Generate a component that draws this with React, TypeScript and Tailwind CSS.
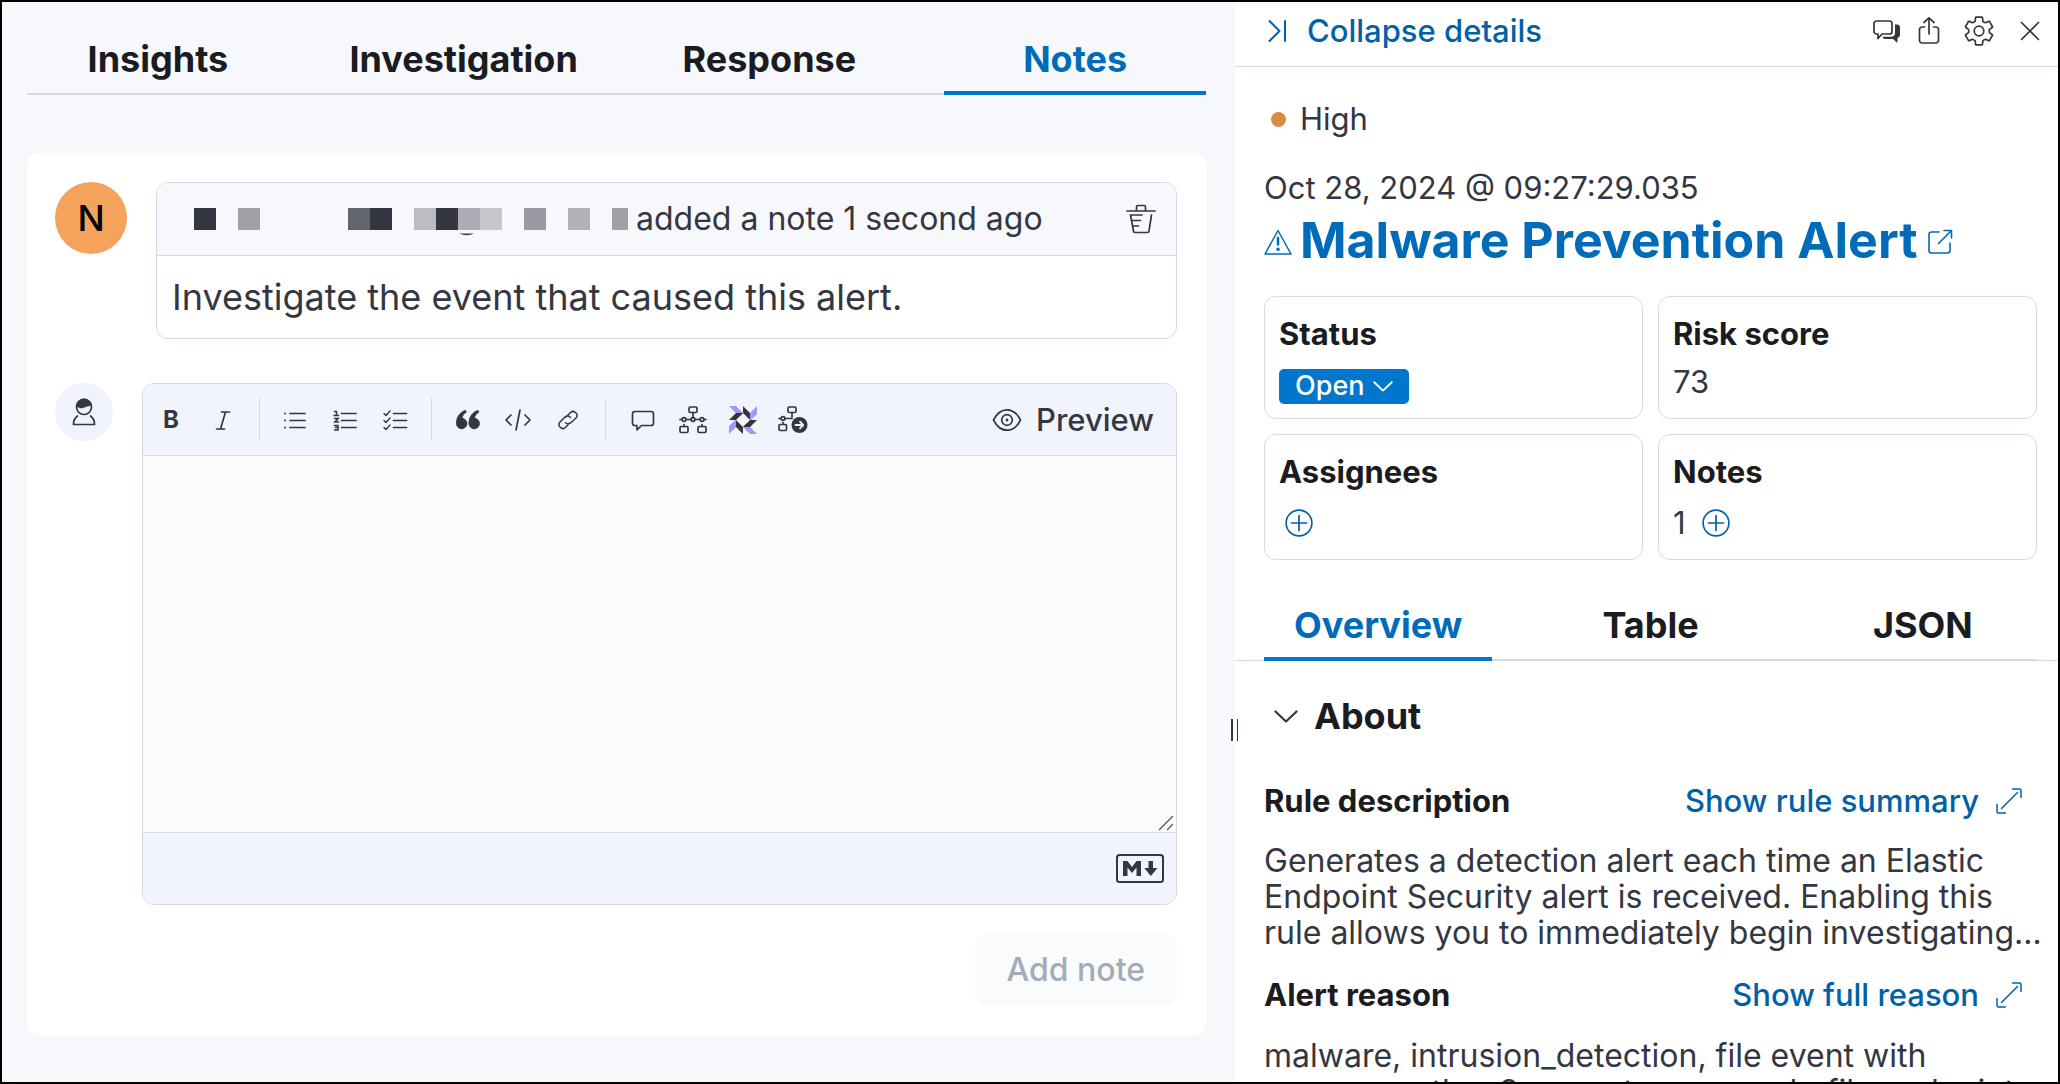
import React, { useState } from "react";

type IconProps = { children: React.ReactNode; className?: string; box?: string };

function Icon({ children, className = "size-7", box = "0 0 28 28" }: IconProps) {
  return (
    <svg
      viewBox={box}
      className={`shrink-0 ${className}`}
      fill="none"
      stroke="currentColor"
      strokeWidth="1.7"
      strokeLinecap="round"
      strokeLinejoin="round"
      aria-hidden="true"
    >
      {children}
    </svg>
  );
}

const polar = (radius: number, degrees: number) => {
  const a = (degrees * Math.PI) / 180;
  return `${(15 + radius * Math.sin(a)).toFixed(2)} ${(15 - radius * Math.cos(a)).toFixed(2)}`;
};

/* Six-toothed cog outline. */
const gearPath =
  [0, 60, 120, 180, 240, 300]
    .map(
      (t, i) =>
        `${i ? "L" : "M"}${polar(10.6, t - 21)} L${polar(13.6, t - 15)} Q${polar(14.6, t - 12)} ${polar(14, t - 9)} L${polar(14, t + 9)} Q${polar(14.6, t + 12)} ${polar(13.6, t + 15)} L${polar(10.6, t + 21)} Q${polar(10, t + 30)} ${polar(10.6, t + 39)}`,
    )
    .join(" ") + " Z";

const icons = {
  italic: (
    <Icon>
      <path d="M12.500 6H20.500M7.500 23H15.500M16.500 6L11.500 23" />
    </Icon>
  ),
  unordered: (
    <Icon>
      <path d="M9 7.500H24M9 14.500H24M9 21.500H24" />
      <path d="M4 7.500H4.010M4 14.500H4.010M4 21.500H4.010" strokeWidth="1.800" />
    </Icon>
  ),
  ordered: (
    <Icon>
      <path d="M10.500 7.500H25M10.500 14.500H25M10.500 21.500H25" />
      <path
        d="M3.500 5.500H5.500V9.500M3 9.500H7.500M3.500 12.500H7L4 16H7.500M3.500 19.500H7V24H3.500M4.500 21.500H7"
        strokeWidth="1.600"
        strokeLinejoin="miter"
      />
    </Icon>
  ),
  checklist: (
    <Icon>
      <path d="M12.500 7.500H25.500M12.500 14.500H25.500M12.500 21.500H25.500" />
      <path d="M3 7.500L5 9.500L9 5M3 14.500L5 16.500L9 12M3 21.500L5 23.500L9 19" strokeWidth="1.400" />
    </Icon>
  ),
  quote: (
    <Icon>
      <path
        d="M11 4.500C5.500 6.500 2.500 11.500 2.500 17.500a5.200 5.200 0 1 0 5.300-5.200C8.500 9.500 10 7.500 12.200 6.100ZM23.500 4.500C18 6.500 15 11.500 15 17.500a5.200 5.200 0 1 0 5.300-5.200C21 9.500 22.500 7.500 24.700 6.100Z"
        fill="currentColor"
        strokeWidth="1"
      />
    </Icon>
  ),
  code: (
    <Icon>
      <path d="M7 9L2 14L7 19M21 9L26 14L21 19M16 4L12 24" />
    </Icon>
  ),
  link: (
    <Icon>
      <path
        d="M12 11L16.500 6.500A3.900 3.900 0 0 1 22 12L16.500 17A3.900 3.900 0 0 1 11.500 16.700M15.500 17L11.500 21.500A3.900 3.900 0 0 1 6 16L11 11A3.900 3.900 0 0 1 16.500 11.500"
        strokeWidth="1.500"
      />
    </Icon>
  ),
  comment: (
    <Icon>
      <path d="M6 5.500H22A2.500 2.500 0 0 1 24.500 8V17A2.500 2.500 0 0 1 22 19.500H12.500L8 24V19.500H6A2.500 2.500 0 0 1 3.500 17V8A2.500 2.500 0 0 1 6 5.500Z" />
    </Icon>
  ),
  timeline: (
    <Icon>
      <rect x="10" y="1" width="8" height="5.500" rx="1.200" />
      <rect x="1" y="20.500" width="8" height="6" rx="1.200" />
      <rect x="19" y="20.500" width="8" height="6" rx="1.200" />
      <circle cx="5" cy="13.500" r="1.900" />
      <circle cx="14" cy="13.500" r="1.900" />
      <circle cx="23" cy="13.500" r="1.900" />
      <path d="M1 13.500H3M7 13.500H12M16 13.500H21M25 13.500H27M14 6.500V11.500M5 18.500V20.500M23 18.500V20.500" />
    </Icon>
  ),
  osquery: (
    <Icon>
      <g stroke="none">
        <path fill="#A596FF" d="M0 0H7L14 7V14L7 7ZM28 0V8L21 15V7ZM28 28H21L14 21V14L21 21ZM0 28V20L7 13V21Z" />
        <path
          fill="#343434"
          d="M14 0L21 7V14L14 7ZM28 14L21 21H14L21 14ZM14 28L7 21V14L14 21ZM0 14L7 7H14L7 14Z"
        />
        <path fill="#F1F4FC" d="M14 7.500L20.500 14L14 20.500L7.500 14Z" />
      </g>
    </Icon>
  ),
  insight: (
    <Icon className="h-7 w-[30px]" box="0 0 30 28">
      <rect x="10" y="1" width="8" height="5.500" rx="1.200" />
      <rect x="1" y="18.500" width="7.500" height="6" rx="1.200" />
      <circle cx="5" cy="12.500" r="1.900" />
      <path d="M1 12.500H3M7 12.500H14M14 6.500V11M5 16.500V18" />
      <circle cx="21.500" cy="19" r="8" fill="currentColor" stroke="none" />
      <path d="M17.500 19H25M22 15.700L25.200 19L22 22.300" stroke="#F1F4FC" strokeWidth="1.800" />
    </Icon>
  ),
};

type ToolName = keyof typeof icons;

const toolGroups: { name: ToolName; label: string }[][] = [
  [
    { name: "unordered", label: "Unordered list" },
    { name: "ordered", label: "Ordered list" },
    { name: "checklist", label: "Task list" },
  ],
  [
    { name: "quote", label: "Quote" },
    { name: "code", label: "Code" },
    { name: "link", label: "Link" },
  ],
  [
    { name: "comment", label: "Comment" },
    { name: "timeline", label: "Timeline" },
    { name: "osquery", label: "Osquery" },
    { name: "insight", label: "Investigation guide" },
  ],
];

const dividerMargins = ["mx-[10px]", "mx-[11px]", "mx-3"];

/* Pixelated blocks covering the author's name: x, width, colour. */
const redaction: [number, number, string][] = [
  [0, 22, "#343642"],
  [44, 22, "#A0A1A5"],
  [154, 22, "#62646F"],
  [176, 22, "#343642"],
  [220, 22, "#BCBDC2"],
  [242, 22, "#343642"],
  [264, 22, "#ADADB8"],
  [286, 22, "#C7C8CD"],
  [330, 22, "#9A9AA4"],
  [374, 22, "#B1B2B7"],
  [418, 16, "#A0A1A5"],
];

function ChevronDown({ className }: { className: string }) {
  return (
    <Icon className={className} box="0 0 24 24">
      <path d="M1.500 7.500L12 17.500L22.500 7.500" strokeWidth="2.200" />
    </Icon>
  );
}

function PlusInCircle() {
  return (
    <Icon>
      <circle cx="14" cy="14" r="12.900" strokeWidth="1.600" />
      <path d="M14 6.500V21.500M6.500 14H21.500" strokeWidth="1.700" />
    </Icon>
  );
}

function Tabs({ names, selected, className, onSelect }: { names: string[]; selected: string; className: string; onSelect: (n: string) => void }) {
  return (
    <div role="tablist" className={`grid gap-11 shadow-[inset_0_-2px_0_#D3DAE6] ${className}`}>
      {names.map((name) => (
        <button
          key={name}
          role="tab"
          aria-selected={name === selected}
          onClick={() => onSelect(name)}
          className={`pb-3 text-center text-[36px] leading-12 font-bold ${
            name === selected ? "text-[#006BB8] shadow-[inset_0_-4px_0_#0077CC]" : "text-[#1A1C21]"
          }`}
        >
          {name}
        </button>
      ))}
    </div>
  );
}

function NotesPanel() {
  const [tab, setTab] = useState("Notes");
  return (
    <main className="min-w-0 bg-[#F7F8FC] pr-[29px] pl-[25px]">
      <Tabs
        names={["Insights", "Investigation", "Response", "Notes"]}
        selected={tab}
        onSelect={setTab}
        className="grid-cols-4 pt-[33px]"
      />
      <section className="mt-[58px] rounded-xl bg-white py-[29px] pr-[29px] pl-7">
        <article className="flex items-start gap-[29px]">
          <div className="flex size-[72px] shrink-0 items-center justify-center rounded-full bg-[#F5A35C] text-[36px] font-medium text-black">
            N
          </div>
          <div className="min-w-0 flex-1 overflow-hidden rounded-xl border border-[#D3DAE6]">
            <header className="flex h-[73px] items-center border-b border-[#D3DAE6] bg-[#F7F8FC] pr-5 pl-[37px]">
              <svg viewBox="0 0 434 34" className="h-[34px] w-[434px] shrink-0" role="img" aria-label="Redacted user name">
                {redaction.map(([x, width, fill]) => (
                  <rect key={x} x={x} y="6" width={width} height="22" fill={fill} />
                ))}
                <path d="M265 31.500H280Q273 35 265 31.500Z" fill="#343642" />
              </svg>
              <span className="ml-2 flex-1 text-[32px] leading-9">added a note 1 second ago</span>
              <button aria-label="Delete note">
                <Icon className="size-[30px]" box="0 0 30 30">
                  <path d="M1 7H29M10.500 7V3A1.500 1.500 0 0 1 12 1.500H18A1.500 1.500 0 0 1 19.500 3V7M4.500 11L7.500 27A1.500 1.500 0 0 0 9 28.500H21.500A1.500 1.500 0 0 0 23 27L25.500 11M4.500 11H16M5.500 16.500H14.500M6.500 22H12.500" />
                </Icon>
              </button>
            </header>
            <p className="px-[15px] py-[17px] text-[36px] leading-12">Investigate the event that caused this alert.</p>
          </div>
        </article>

        <form className="mt-11" onSubmit={(e) => e.preventDefault()}>
          <div className="flex items-start gap-[29px]">
            <div className="flex size-[58px] shrink-0 items-center justify-center rounded-full bg-[#F1F4FC]">
              <Icon>
                <circle cx="14" cy="9" r="7.500" />
                <path d="M6.500 8.500A7.500 7.500 0 0 1 21.300 6.500C19 9 17 7.500 14 9.500C11.500 10.800 8.500 9.500 6.500 8.500Z" fill="currentColor" strokeWidth="0.500" />
                <path d="M7.500 18C4.500 20 3.500 22.500 3.500 26.500H24.500C24.500 22.500 23.500 20 20.500 18" />
              </Icon>
            </div>
            <div className="flex min-w-0 flex-1 flex-col overflow-hidden rounded-xl border border-[#D3DAE6]">
              <div className="flex h-[72px] items-center border-b border-[#D3DAE6] bg-[#F1F4FC] pr-[22px] pl-0.5">
                <button type="button" aria-label="Bold" className="w-[52px] text-center text-2xl font-bold">
                  B
                </button>
                <button type="button" aria-label="Italic" className="flex w-[52px] justify-center">
                  {icons.italic}
                </button>
                {toolGroups.map((group, i) => (
                  <React.Fragment key={group[0].name}>
                    <span className={`h-[43px] w-px bg-[#D3DAE6] ${dividerMargins[i]}`} />
                    {group.map((tool) => (
                      <button key={tool.name} type="button" aria-label={tool.label} className="flex w-[50px] justify-center">
                        {icons[tool.name]}
                      </button>
                    ))}
                  </React.Fragment>
                ))}
                <button type="button" className="ml-auto flex items-center gap-[14px] text-[31px] leading-9 font-medium">
                  <Icon className="size-[30px]" box="0 0 30 30">
                    <path d="M1.500 15C5 8 9.500 4.800 15 4.800S25 8 28.500 15C25 22 20.500 25.200 15 25.200S5 22 1.500 15Z" />
                    <circle cx="15" cy="15" r="5.300" />
                    <circle cx="15" cy="15" r="1.400" fill="currentColor" stroke="none" />
                  </Icon>
                  Preview
                </button>
              </div>
              <div className="relative">
                <textarea aria-label="Note" className="block h-[376px] w-full resize-none bg-[#FAFBFD] p-4 text-[32px] outline-none" />
                <Icon className="pointer-events-none absolute right-0.5 bottom-px size-4 text-[#5A5A5A]" box="0 0 16 16">
                  <path d="M1.500 14.500L14.500 1.500M9.500 14.500L14.500 9.500" strokeWidth="1.400" />
                </Icon>
              </div>
              <div className="flex h-[72px] items-center justify-end border-t border-[#D3DAE6] bg-[#F1F4FC] pr-3">
                <button type="button" aria-label="Syntax help">
                  <Icon className="h-[29px] w-12" box="0 0 48 29">
                    <rect x="1" y="1" width="46" height="27" rx="2.500" strokeWidth="2" />
                    <path d="M7 22V7H11.500L16 13L20.500 7H25V22H20.500V13.500L16 19L11.500 13.500V22ZM32.500 7H37V14H41.500L34.800 22L28.300 14H32.500Z" fill="currentColor" stroke="none" />
                  </Icon>
                </button>
              </div>
            </div>
          </div>
          <div className="mt-[29px] flex justify-end">
            <button disabled className="h-[72px] rounded-xl bg-[#FAFBFD] px-8 text-[32px] leading-9 font-medium text-[#A2ABBA]">
              Add note
            </button>
          </div>
        </form>
      </section>
    </main>
  );
}

function Card({ title, children }: { title: string; children: React.ReactNode }) {
  return (
    <div className="rounded-xl border border-[#D3DAE6] px-[14px] pt-[19px] pb-[14px]">
      <h3 className="text-[31px] leading-9 font-bold text-[#1A1C21]">{title}</h3>
      {children}
    </div>
  );
}

function SectionRow({ title, link }: { title: string; link: string }) {
  return (
    <div className="flex items-center justify-between text-[31px] leading-9">
      <h4 className="font-bold text-[#1A1C21]">{title}</h4>
      <button className="mr-[14px] flex items-center gap-4 font-medium text-[#0061A6]">
        {link}
        <Icon>
          <path d="M17.500 2H24.500A1.500 1.500 0 0 1 26 3.500V10.500M10.500 26H3.500A1.500 1.500 0 0 1 2 24.500V17.500M22.500 5.500L6.500 21.500" strokeWidth="1.500" />
        </Icon>
      </button>
    </div>
  );
}

function DetailsPanel() {
  const [tab, setTab] = useState("Overview");
  return (
    <aside className="relative min-w-0 bg-white">
      <div role="separator" aria-orientation="vertical" className="absolute top-[717px] -left-1 h-[22px] w-[7px] border-r border-l-2 border-[#343741]" />
      <header className="flex h-[65px] items-center border-b border-[#D3DAE6] pr-[14px] pb-1.5 pl-8">
        <button className="mr-auto flex items-center gap-[18px] text-[31px] leading-9 font-medium text-[#0061A6]">
          <Icon className="h-6 w-[22px]" box="0 0 22 24">
            <path d="M2.500 2L12.500 12L2.500 22M18 2V22" strokeWidth="2" />
          </Icon>
          Collapse details
        </button>
        <button aria-label="Chat" className="mr-[14px]">
          <Icon>
            <path d="M3.500 4H16.500A2.500 2.500 0 0 1 19 6.500V14.500A2.500 2.500 0 0 1 16.500 17H9L5 21.500V17H3.500A2.500 2.500 0 0 1 1 14.500V6.500A2.500 2.500 0 0 1 3.500 4Z" />
            <path d="M22 7.500H24A3 3 0 0 1 27 10.500V18A3.500 3.500 0 0 1 24.500 21V26L20 22H12Q10 22 9.500 19.800H18Q22 19.500 22 16Z" fill="currentColor" stroke="none" />
          </Icon>
        </button>
        <button aria-label="Share" className="mr-[21px]">
          <Icon>
            <path d="M9.500 10H7A2.500 2.500 0 0 0 4.500 12.500V23.500A2.500 2.500 0 0 0 7 26H21A2.500 2.500 0 0 0 23.500 23.500V12.500A2.500 2.500 0 0 0 21 10H18.500M14 17V1M9 5.500L14 0.900L19 5.500" />
          </Icon>
        </button>
        <button aria-label="Settings" className="mr-[22px]">
          <Icon className="size-[30px]" box="0 0 30 30">
            <path d={gearPath} />
            <circle cx="15" cy="15" r="4.800" />
          </Icon>
        </button>
        <button aria-label="Close">
          <Icon>
            <path d="M5.500 5.500L22.500 22.500M22.500 5.500L5.500 22.500" />
          </Icon>
        </button>
      </header>

      <div className="pr-[21px] pl-[29px]">
        <div className="mt-[34px] flex items-center gap-[14px] pl-[7px] text-[31px] leading-9">
          <span className="size-[15px] rounded-full bg-[#DA8B45]" />
          High
        </div>
        <p className="mt-[33px] text-[31px] leading-9">Oct 28, 2024 @ 09:27:29.035</p>
        <h2>
          <a href="#rule" className="flex items-center gap-2 text-[50px] leading-[68px] font-bold text-[#006BB8]">
            <Icon className="mt-1 size-7">
              <path d="M14 2.500L27 26H1Z" strokeWidth="1.500" />
              <path d="M14 10V16.500" strokeWidth="2.500" />
              <circle cx="14" cy="21.300" r="1.700" fill="currentColor" stroke="none" />
            </Icon>
            Malware Prevention Alert
            <Icon className="mt-1 size-7">
              <path d="M13 4H5.500A2.500 2.500 0 0 0 3 6.500V22.500A2.500 2.500 0 0 0 5.500 25H21.500A2.500 2.500 0 0 0 24 22.500V15M18 2.500H25.500V10M25.500 2.500L12.500 15.500" strokeWidth="1.600" />
            </Icon>
          </a>
        </h2>
        <div className="mt-[22px] grid grid-cols-2 gap-[15px]">
          <Card title="Status">
            <button className="mt-[17px] flex h-[35px] items-center gap-2 rounded-[5px] bg-[#0077CC] px-4 pb-0.5 text-[27px] leading-none font-medium text-white">
              Open
              <ChevronDown className="size-5" />
            </button>
          </Card>
          <Card title="Risk score">
            <p className="mt-3 text-[31px] leading-9">73</p>
          </Card>
          <Card title="Assignees">
            <button aria-label="Add assignee" className="mt-3 mb-px flex h-[42px] w-10 items-center justify-center text-[#0061A6]">
              <PlusInCircle />
            </button>
          </Card>
          <Card title="Notes">
            <div className="mt-3 mb-px flex h-[42px] items-center gap-4 text-[31px] leading-9">
              1
              <button aria-label="Add note to alert" className="text-[#0061A6]">
                <PlusInCircle />
              </button>
            </div>
          </Card>
        </div>
      </div>

      <div className="pr-[21px] pl-[29px] shadow-[inset_0_-1px_0_#D3DAE6]">
        <Tabs names={["Overview", "Table", "JSON"]} selected={tab} onSelect={setTab} className="grid-cols-3 pt-[41px]" />
      </div>

      <div className="pr-[21px] pl-[29px]">
        <button aria-expanded="true" className="mt-[31px] flex items-center gap-4 pl-2.5 text-[36px] leading-12 font-bold text-[#1A1C21]">
          <ChevronDown className="size-6 text-[#343741]" />
          About
        </button>
        <div className="mt-[43px]">
          <SectionRow title="Rule description" link="Show rule summary" />
          <p className="mt-6 -mr-4 line-clamp-3 text-[32px] leading-9">
            Generates a detection alert each time an Elastic Endpoint Security alert is received. Enabling this rule
            allows you to immediately begin investigating your Endpoint alerts.
          </p>
        </div>
        <div className="mt-[26px]">
          <SectionRow title="Alert reason" link="Show full reason" />
          <p className="mt-[25px] text-[32px] leading-9">
            malware, intrusion_detection, file event with process python3, parent process sh, file endpoint
          </p>
        </div>
      </div>
    </aside>
  );
}

export default function App() {
  return (
    <div className="grid h-screen grid-cols-[1233fr_823fr] overflow-hidden border-2 border-black bg-white font-['Inter',sans-serif] text-[#343741]">
      <NotesPanel />
      <DetailsPanel />
    </div>
  );
}
